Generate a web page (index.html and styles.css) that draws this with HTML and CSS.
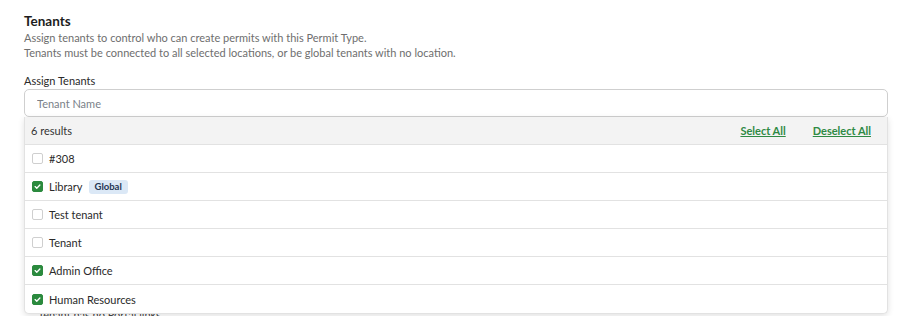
FILE: index.html
```html
<!DOCTYPE html>
<html lang="en">
  <head>
    <meta charset="UTF-8">
    <meta name="viewport" content="width=device-width, initial-scale=1.0">
    <link rel="stylesheet" href="styles.css">
    <title>Tenants</title>
  </head>
  <body>
    <div class="section">
      <h2 class="title">Tenants</h2>
      <p class="hint">Assign tenants to control who can create permits with this Permit Type.</p>
      <p class="hint">Tenants must be connected to all selected locations, or be global tenants with no location.</p>

      <label class="label" for="tenant">Assign Tenants</label>
      <div class="picker">
        <input id="tenant" class="search" placeholder="Tenant Name" />
        <div class="dropdown">
          <div class="head">
            <span>6 results</span>
            <div class="links">
              <a href="#">Select All</a>
              <a href="#">Deselect All</a>
            </div>
          </div>
          <ul class="list">
            <li><span class="box"></span>#308</li>
            <li><span class="box on"></span>Library <span class="badge">Global</span></li>
            <li><span class="box"></span>Test tenant</li>
            <li><span class="box"></span>Tenant</li>
            <li><span class="box on"></span>Admin Office</li>
            <li><span class="box on"></span>Human Resources</li>
          </ul>
        </div>
      </div>
      <div class="under">
        <p>Tenant has no Portal links</p>
      </div>
    </div>
  </body>
</html>
```

FILE: styles.css
```css
* {
margin: 0;
padding: 0;
box-sizing: border-box;
}
body {
font-family: "Lato", "Open Sans", sans-serif;
color: #222;
background: #fff;
}
.section {
padding: 12px 22px 0 24px;
}
.title {
font-size: 13.5px;
line-height: 18px;
font-weight: 700;
color: #1d1d1d;
}
.hint {
font-size: 11px;
line-height: 15px;
color: #6e6e6e;
}
.label {
display: block;
margin-top: 13px;
font-size: 11px;
line-height: 15px;
color: #2a2a2a;
}
.picker {
position: relative;
margin-top: 1px;
}
.search {
display: block;
width: 100%;
height: 28px;
padding: 0 12px;
border: 1px solid #cfcfcf;
border-radius: 5px;
font-family: inherit;
font-size: 11px;
color: #222;
outline: none;
}
.search::placeholder {
color: #7a7f88;
}
.dropdown {
position: absolute;
top: 28px;
left: 0;
right: 0;
background: #fff;
border: 1px solid #e2e2e2;
border-top: none;
border-radius: 0 0 5px 5px;
box-shadow: 0 2px 6px rgba(0, 0, 0, 0.12);
z-index: 2;
}
.head {
display: flex;
align-items: center;
justify-content: space-between;
height: 28px;
padding: 0 16px 0 6px;
background: #f3f3f3;
border-bottom: 1px solid #e2e2e2;
font-size: 11px;
color: #333;
}
.links {
display: flex;
gap: 27px;
}
.links a {
color: #2f8a44;
font-weight: 700;
text-decoration: underline;
}
.list {
list-style: none;
}
.list li {
display: flex;
align-items: center;
height: 28px;
padding-left: 7px;
border-bottom: 1px solid #e2e2e2;
font-size: 11px;
color: #2a2a2a;
}
.list li:last-child {
border-bottom: none;
}
.box {
width: 11px;
height: 11px;
margin-right: 6px;
border: 1px solid #cfcfcf;
border-radius: 2px;
background: #fff;
}
.box.on {
border-color: #2b8a3e;
background: #2b8a3e url("data:image/svg+xml,%3Csvg xmlns='http://www.w3.org/2000/svg' viewBox='0 0 11 11'%3E%3Cpath d='M2.6 5.6l2 2 3.8-4' fill='none' stroke='%23fff' stroke-width='1.6' stroke-linecap='round' stroke-linejoin='round'/%3E%3C/svg%3E") center/100% no-repeat;
}
.badge {
margin-left: 6px;
padding: 2px 6px;
border-radius: 3px;
background: #dbe8f6;
color: #1f3553;
font-size: 9.5px;
line-height: 10px;
font-weight: 700;
}
.under {
padding: 190px 0 0 14px;
font-size: 11px;
line-height: 15px;
color: #444;
}
```
